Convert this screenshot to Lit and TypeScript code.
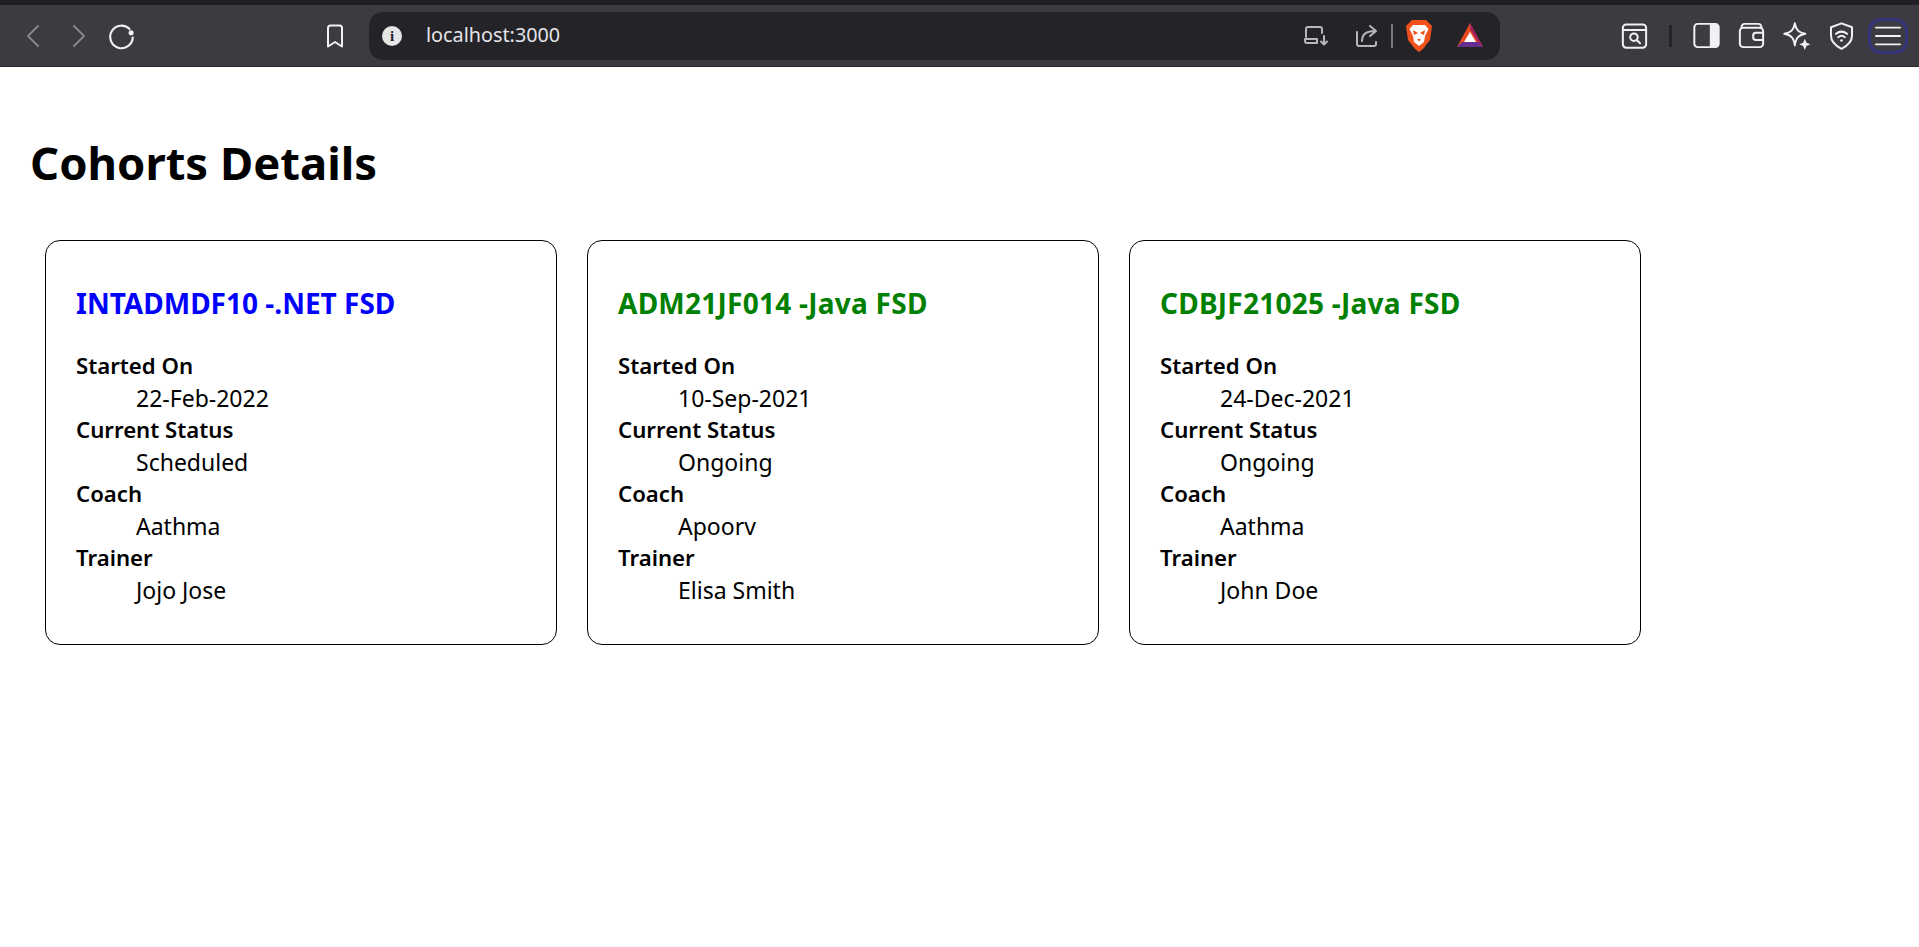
import { LitElement, html, css, svg } from "lit";
import { customElement } from "lit/decorators.js";

interface Cohort {
  code: string;
  tech: string;
  started: string;
  status: string;
  coach: string;
  trainer: string;
}

const COHORTS: Cohort[] = [
  { code: "INTADMDF10", tech: ".NET FSD", started: "22-Feb-2022", status: "Scheduled", coach: "Aathma", trainer: "Jojo Jose" },
  { code: "ADM21JF014", tech: "Java FSD", started: "10-Sep-2021", status: "Ongoing", coach: "Apoorv", trainer: "Elisa Smith" },
  { code: "CDBJF21025", tech: "Java FSD", started: "24-Dec-2021", status: "Ongoing", coach: "Aathma", trainer: "John Doe" },
];

const icon = (body: unknown, cls = "") => html`<svg class="icon ${cls}" viewBox="0 0 28 28">${body}</svg>`;

const ICONS = {
  back: svg`<path d="M18 4 L8 14 L18 24" />`,
  forward: svg`<path d="M10 4 L20 14 L10 24" />`,
  reload: svg`<path d="M21 7.5 A10.5 10.5 0 1 0 24 15.5" /><circle class="fill" cx="22.5" cy="11" r="2.4" />`,
  bookmark: svg`<path d="M7 6 Q7 3.5 9.5 3.5 H18.5 Q21 3.5 21 6 V24.5 L14 20 L7 24.5 Z" />`,
  download: svg`<path d="M20 11 V7 Q20 5 18 5 H6 Q4 5 4 7 V15 M3 17 H15 V21 H5 Q3 21 3 19 Z M22 14 V22 M19 19.5 L22 22.5 L25 19.5" />`,
  share: svg`<path d="M5 10 V22 Q5 24 7 24 H22 Q24 24 24 22 V20 M10 19 C10 12 14 9 23 9 M18 4 L24 9 L18 14" />`,
  search: svg`<rect x="3.5" y="4" width="21" height="21" rx="3" /><path d="M3.5 9 H24.5" /><circle cx="13.5" cy="15.5" r="3.4" /><path d="M16 18 L19 21" />`,
  sidebar: svg`<rect x="3" y="3.5" width="22" height="21" rx="3" /><path class="fill" d="M17 3.5 H22 Q25 3.5 25 6.5 V21.5 Q25 24.5 22 24.5 H17 Z" />`,
  wallet: svg`<path d="M5 7 Q5 3.5 8 3.5 H20 Q23 3.5 23 7" /><rect x="3.5" y="7" width="21" height="17.5" rx="3" /><path d="M24.5 11.5 H18 Q15.5 11.5 15.5 14 V15.5 Q15.5 18 18 18 H24.5" />`,
  star: svg`<path d="M12.5 3 C13.5 9 16 11.5 22 12.5 C16 13.5 13.5 16 12.5 23 C11.5 16 9 13.5 3 12.5 C9 11.5 11.5 9 12.5 3 Z" /><path class="fill" d="M21.5 17 L23 20.5 L26.5 22 L23 23.5 L21.5 27 L20 23.5 L16.5 22 L20 20.5 Z" />`,
  shield: svg`<path d="M14 3 L23.5 6.5 V14 C23.5 20 19 23.5 14 26 C9 23.5 4.5 20 4.5 14 V6.5 Z" /><path d="M9 12.5 Q14 8.5 19 12.5 M11 15.5 Q14 13 17 15.5" /><circle class="fill" cx="14" cy="18.5" r="1.2" />`,
  menu: svg`<path d="M1 5 H27 M1 14 H27 M1 23 H27" />`,
};

@customElement("app-root")
export class AppRoot extends LitElement {
  static styles = css`
    :host {
      display: block;
      min-height: 947px;
      background: #fff;
      font-family: "Noto Sans", "Open Sans", sans-serif;
      color: #000;
    }
    .chrome {
      border-top: 5px solid #1f1f24;
      border-bottom: 1px solid #2a2a2e;
      box-sizing: border-box;
      height: 67px;
      background: #3b3b41;
      display: flex;
      align-items: center;
      padding-left: 12px;
    }
    .btn {
      width: 44px;
      height: 44px;
      flex: none;
      display: flex;
      align-items: center;
      justify-content: center;
      color: #f1f1f3;
    }
    .btn.wide {
      width: 45px;
    }
    .btn.wide .icon {
      width: 31px;
      height: 31px;
      stroke-width: 1.8;
    }
    .btn.off {
      color: #85858a;
    }
    .btn.reload .icon {
      width: 30px;
      height: 30px;
    }
    .icon {
      width: 28px;
      height: 28px;
      fill: none;
      stroke: currentColor;
      stroke-width: 2;
      stroke-linecap: round;
      stroke-linejoin: round;
    }
    .icon .fill {
      fill: currentColor;
      stroke: none;
    }
    .bookmark {
      margin-left: 169px;
    }
    .url {
      width: 1131px;
      height: 48px;
      margin-left: 12px;
      flex: none;
      box-sizing: border-box;
      background: #232328;
      border-radius: 14px;
      display: flex;
      align-items: center;
      padding-left: 13px;
      color: #e8e8ea;
    }
    .info {
      width: 20px;
      height: 20px;
      border-radius: 50%;
      background: #e6e6e9;
      color: #232328;
      font: bold 15px/20px "Liberation Serif", serif;
      text-align: center;
      flex: none;
    }
    .host {
      margin-left: 24px;
      margin-top: -2px;
      font-size: 19.8px;
      flex: 1;
      color: #e4e4e8;
    }
    .url .btn {
      color: #b8b8bc;
      width: 50px;
    }
    .url-sep {
      width: 2px;
      height: 24px;
      background: #77777c;
      margin: 0 12px 0 0;
      flex: none;
    }
    .logo {
      width: 28px;
      height: 36px;
      flex: none;
      margin-right: 21px;
    }
    .logo.bat {
      width: 32px;
      margin-right: 14px;
    }
    .right-start {
      margin-left: 112px;
    }
    .sep {
      width: 3px;
      height: 22px;
      background: #232328;
      margin: 0 12px 0 12px;
      flex: none;
    }
    .menu {
      border: 3px solid #35357f;
      border-radius: 13px;
      width: 40px;
      height: 36px;
      margin-left: 4px;
      box-sizing: border-box;
      display: flex;
      align-items: center;
      justify-content: center;
      color: #f1f1f3;
    }
    .menu .icon {
      width: 26px;
      height: 26px;
    }
    main {
      padding: 0 30px;
    }
    h1 {
      margin: 0;
      padding-top: 63px;
      font-size: 45.4px;
      line-height: 64px;
      font-weight: 700;
    }
    .cards {
      display: flex;
      gap: 30px;
      margin: 46px 0 0 15px;
    }
    .card {
      width: 512px;
      height: 405px;
      box-sizing: border-box;
      border: 1px solid #000;
      border-radius: 15px;
      padding: 0 30px;
    }
    h3 {
      margin: 44px 0 0;
      font-size: 28px;
      line-height: 37px;
      font-weight: 700;
    }
    .scheduled {
      color: #00f;
    }
    .ongoing {
      color: #008000;
      letter-spacing: 0.25px;
    }
    dl {
      margin: 28px 0 0;
      font-size: 23px;
      line-height: 32px;
    }
    dt {
      font-size: 22.2px;
      font-weight: 600;
    }
    dd {
      margin: 0 0 0 60px;
    }
  `;

  private _card(c: Cohort) {
    const rows: [string, string][] = [
      ["Started On", c.started],
      ["Current Status", c.status],
      ["Coach", c.coach],
      ["Trainer", c.trainer],
    ];
    return html`
      <section class="card">
        <h3 class=${c.status === "Scheduled" ? "scheduled" : "ongoing"}>${c.code} -${c.tech}</h3>
        <dl>
          ${rows.map(([k, v]) => html`<dt>${k}</dt><dd>${v}</dd>`)}
        </dl>
      </section>
    `;
  }

  render() {
    return html`
      <header class="chrome">
        <div class="btn off">${icon(ICONS.back)}</div>
        <div class="btn off">${icon(ICONS.forward)}</div>
        <div class="btn reload">${icon(ICONS.reload)}</div>
        <div class="btn bookmark">${icon(ICONS.bookmark)}</div>
        <div class="url">
          <div class="info">i</div>
          <div class="host">localhost:3000</div>
          <div class="btn">${icon(ICONS.download)}</div>
          <div class="btn">${icon(ICONS.share)}</div>
          <div class="url-sep"></div>
          <svg class="logo" viewBox="0 0 28 36">
            <path d="M7 2 H21 L24 5 L27 8 L25 22 L18 31 L14 34 L10 31 L3 22 L1 8 L4 5 Z" fill="#f1511b" />
            <path d="M8 7 H20 L23.5 11 L20 18 L19 24 L14 28 L9 24 L8 18 L4.5 11 Z" fill="#fff" />
            <path d="M8 12 L13 15 L9 17 Z M20 12 L15 15 L19 17 Z M12 21 H16 L14 23.5 Z" fill="#f1511b" />
          </svg>
          <svg class="logo bat" viewBox="0 0 32 36">
            <path d="M16 5 L3 29 H29 Z" fill="#e8491f" />
            <path d="M16 5 L29 29 L24 24 L16 11 Z" fill="#9e1f63" />
            <path d="M3 29 H29 L24 24 H8 Z" fill="#662d91" />
            <path d="M16 14 L10 24 H22 Z" fill="#fff" />
          </svg>
        </div>
        <div class="btn wide right-start">${icon(ICONS.search)}</div>
        <div class="sep"></div>
        <div class="btn wide">${icon(ICONS.sidebar)}</div>
        <div class="btn wide">${icon(ICONS.wallet)}</div>
        <div class="btn wide">${icon(ICONS.star)}</div>
        <div class="btn wide">${icon(ICONS.shield)}</div>
        <div class="menu">${icon(ICONS.menu)}</div>
      </header>
      <main>
        <h1>Cohorts Details</h1>
        <div class="cards">${COHORTS.map((c) => this._card(c))}</div>
      </main>
    `;
  }
}
